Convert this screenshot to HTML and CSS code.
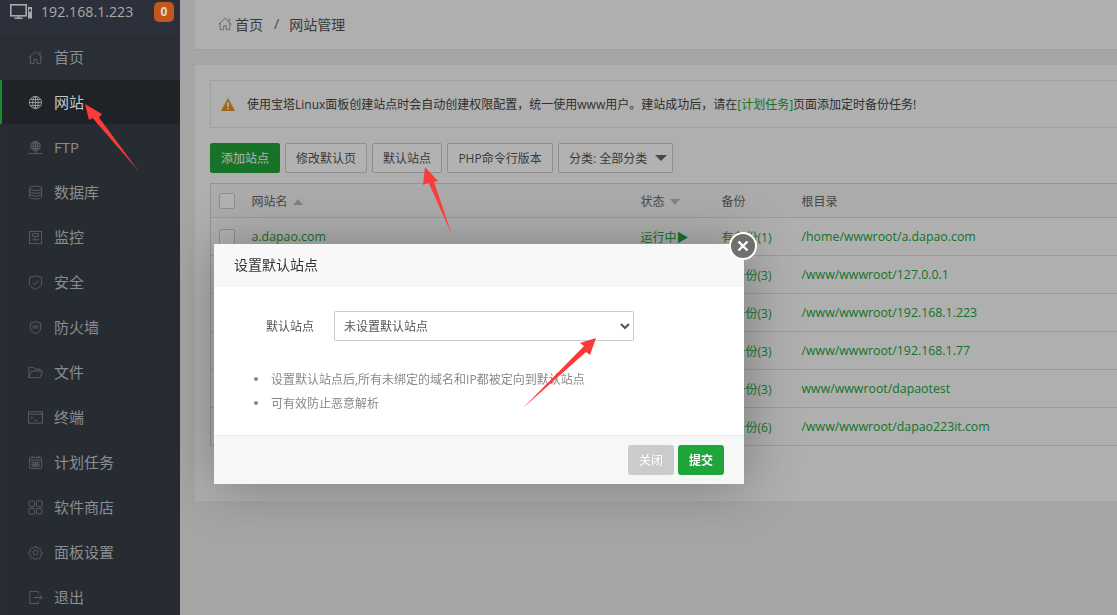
FILE: index.html
```html
<!DOCTYPE html>
<html lang="zh-CN">
<head>
<meta charset="utf-8">
<title>网站管理</title>
<link rel="stylesheet" href="styles.css">
</head>
<body>
<div class="app">
  <aside class="sidebar">
    <div class="host">
      <svg class="host-icon" viewBox="0 0 22 15"><rect x="0.8" y="0.8" width="15.400" height="11" fill="none" stroke="#a7a9ab" stroke-width="1.600"/><path d="M4.500 14.200h8M8.500 12v2" stroke="#a7a9ab" stroke-width="1.400"/><rect x="18" y="3" width="4" height="11.500" fill="#a7a9ab"/><rect x="19.200" y="5" width="1.600" height="3" fill="#2b303a"/></svg>
      <span class="host-ip">192.168.1.223</span>
      <span class="badge">0</span>
    </div>
    <nav class="nav">
      <a class="nav-item"><svg class="nav-icon" viewBox="0 0 16 16"><path d="M0.500 8.500 8 1.500 15.500 8.500M2.500 7V14.500h4V10h3v4.500h4V7M11.500 2.500h1.500v2.500"/></svg><span class="nav-label">首页</span></a>
      <a class="nav-item active"><svg class="nav-icon light" viewBox="0 0 16 16"><circle cx="8" cy="8" r="6.500"/><ellipse cx="8" cy="8" rx="3" ry="6.500"/><path d="M8 1.500v13M1.500 8h13M2.500 4.800h11M2.500 11.200h11"/></svg><span class="nav-label">网站</span></a>
      <a class="nav-item"><svg class="nav-icon" viewBox="0 0 16 16"><circle cx="8" cy="6.500" r="5"/><ellipse cx="8" cy="6.500" rx="2.300" ry="5"/><path d="M8 1.500v10M3 6.500h10M3.800 4h8.400M3.800 9h8.400M0.500 14.500h15M8 11.500v3"/></svg><span class="nav-label">FTP</span></a>
      <a class="nav-item"><svg class="nav-icon" viewBox="0 0 16 16"><ellipse cx="8" cy="3.500" rx="6.500" ry="2.300"/><path d="M1.500 3.500v9c0 1.300 3 2.300 6.500 2.300s6.500-1 6.500-2.300v-9M1.500 6.500c0 1.300 3 2.300 6.500 2.300s6.500-1 6.500-2.300M1.500 9.500c0 1.300 3 2.300 6.500 2.300s6.500-1 6.500-2.300"/></svg><span class="nav-label">数据库</span></a>
      <a class="nav-item"><svg class="nav-icon" viewBox="0 0 16 16"><rect x="1.500" y="1.500" width="13" height="13"/><path d="M3.500 10.500h3l1-2 1.200 3 1-1.500h2M5 4h6v3H5z"/></svg><span class="nav-label">监控</span></a>
      <a class="nav-item"><svg class="nav-icon" viewBox="0 0 16 16"><path d="M8 0.800 14.500 2.800v6c0 3-3.300 5.200-6.500 6.400-3.200-1.200-6.500-3.400-6.500-6.400v-6zM5 7.800l2.300 2.200L11 6.500"/></svg><span class="nav-label">安全</span></a>
      <a class="nav-item"><svg class="nav-icon" viewBox="0 0 16 16"><path d="M8 1.500 13.500 3.500v5c0 3-2.500 5-5.500 6-3-1-5.500-3-5.500-6v-5zM4.800 6.500h6.400M4.800 8.500h6.400"/></svg><span class="nav-label">防火墙</span></a>
      <a class="nav-item"><svg class="nav-icon" viewBox="0 0 16 16"><path d="M1 13.500V2.500h5l1.500 2H13V6.500M1 13.500 3.500 6.500H15.500L13 13.500z"/></svg><span class="nav-label">文件</span></a>
      <a class="nav-item"><svg class="nav-icon" viewBox="0 0 16 16"><rect x="0.500" y="2" width="15" height="12"/><path d="M0.500 4.500h15M3 7l2 1.500L3 10M6.500 11H10"/></svg><span class="nav-label">终端</span></a>
      <a class="nav-item"><svg class="nav-icon" viewBox="0 0 16 16"><rect x="1.500" y="2.500" width="13" height="12" rx="1"/><path d="M1.500 5.500h13M4.500 1v2.500M11.500 1v2.500M3.500 8h9M3.500 10h9M3.500 12h9M6 7.500v5M8 7.500v5M10 7.500v5"/></svg><span class="nav-label">计划任务</span></a>
      <a class="nav-item"><svg class="nav-icon" viewBox="0 0 16 16"><rect x="1" y="1" width="6" height="6" rx="1"/><rect x="9" y="1" width="6" height="6" rx="1"/><rect x="1" y="9" width="6" height="6" rx="1"/><rect x="9" y="9" width="6" height="6" rx="1"/></svg><span class="nav-label">软件商店</span></a>
      <a class="nav-item"><svg class="nav-icon" viewBox="0 0 16 16"><circle cx="8" cy="8" r="2.500"/><path d="M6.800 1.500h2.400l.4 2 1.500.7 1.800-1 1.600 1.700-1.100 1.700.6 1.500 2 .5v2.300l-2 .4-.6 1.500 1.100 1.700-1.600 1.600-1.800-1-1.500.6-.4 2H6.800l-.4-2-1.500-.6-1.800 1-1.600-1.600 1.100-1.700-.6-1.500-2-.4V8.100l2-.5.6-1.500-1.100-1.700 1.600-1.700 1.800 1 1.500-.7z" transform="translate(.8 .2) scale(.9)"/></svg><span class="nav-label">面板设置</span></a>
      <a class="nav-item"><svg class="nav-icon" viewBox="0 0 16 16"><path d="M11 4V1.500H2v13h9V12M6 8h9M12.500 5.500 15 8l-2.500 2.500"/></svg><span class="nav-label">退出</span></a>
    </nav>
  </aside>
  <main class="main">
    <header class="crumbs">
      <svg class="crumb-home" viewBox="0 0 16 16"><path d="M0.500 8.500 8 1.500 15.500 8.500M2.500 7V14.500h4V10h3v4.500h4V7M11.500 2.500h1.500v2.500"/></svg>
      <span class="crumb-link">首页</span>
      <span class="crumb-sep">/</span>
      <span class="crumb-cur">网站管理</span>
    </header>
    <section class="card">
      <div class="notice">
        <svg class="warn" viewBox="0 0 14 13"><path d="M7 0 14 13H0z" fill="#e79320"/><path d="M6.200 4h1.600v5H6.200zM6.200 10h1.600v1.500H6.200z" fill="#fff"/></svg>
        <span>使用宝塔Linux面板创建站点时会自动创建权限配置，统一使用www用户。建站成功后，请在<a class="green">[计划任务]</a>页面添加定时备份任务!</span>
      </div>
      <div class="toolbar">
        <button class="btn primary">添加站点</button>
        <button class="btn">修改默认页</button>
        <button class="btn">默认站点</button>
        <button class="btn php">PHP命令行版本</button>
        <button class="btn dropdown">分类: 全部分类<i class="caret"></i></button>
      </div>
      <table class="table">
        <thead>
          <tr>
            <th class="c-check"><i class="check"></i></th>
            <th class="c-name">网站名<i class="sort-up"></i></th>
            <th class="c-status">状态<i class="sort-down"></i></th>
            <th class="c-backup">备份</th>
            <th>根目录</th>
          </tr>
        </thead>
        <tbody>
          <tr><td class="c-check"><i class="check"></i></td><td class="green latin">a.dapao.com</td><td class="green">运行中▶</td><td class="green">有备份(1)</td><td class="green latin">/home/wwwroot/a.dapao.com</td></tr>
          <tr><td class="c-check"><i class="check"></i></td><td class="green latin">127.0.0.1</td><td class="green">运行中▶</td><td class="green">有备份(3)</td><td class="green latin">/www/wwwroot/127.0.0.1</td></tr>
          <tr><td class="c-check"><i class="check"></i></td><td class="green latin">192.168.1.223</td><td class="green">运行中▶</td><td class="green">有备份(3)</td><td class="green latin">/www/wwwroot/192.168.1.223</td></tr>
          <tr><td class="c-check"><i class="check"></i></td><td class="green latin">192.168.1.77</td><td class="green">运行中▶</td><td class="green">有备份(3)</td><td class="green latin">/www/wwwroot/192.168.1.77</td></tr>
          <tr><td class="c-check"><i class="check"></i></td><td class="green latin">dapaotest</td><td class="green">运行中▶</td><td class="green">有备份(3)</td><td class="green latin">www/wwwroot/dapaotest</td></tr>
          <tr><td class="c-check"><i class="check"></i></td><td class="green latin">dapao223it.com</td><td class="green">运行中▶</td><td class="green">有备份(6)</td><td class="green latin">/www/wwwroot/dapao223it.com</td></tr>
        </tbody>
      </table>
    </section>
  </main>
</div>

<div class="shade"></div>

<div class="modal">
  <button class="modal-close" aria-label="关闭"><svg viewBox="0 0 12 12"><path d="M1.500 1.500l9 9M10.500 1.500l-9 9"/></svg></button>
  <div class="modal-title">设置默认站点</div>
  <div class="modal-body">
    <div class="field">
      <label class="field-label">默认站点</label>
      <select class="field-select"><option>未设置默认站点</option></select>
    </div>
    <ul class="tips">
      <li>设置默认站点后,所有未绑定的域名和IP都被定向到默认站点</li>
      <li>可有效防止恶意解析</li>
    </ul>
  </div>
  <div class="modal-foot">
    <button class="mbtn gray">关闭</button>
    <button class="mbtn submit">提交</button>
  </div>
</div>

<svg class="arrows" viewBox="0 0 1117 615">
  <path d="M85 104 102 114 99 117.500 138.500 171 92.500 118 89 120z"/>
  <path d="M425 167 438 181 434 182 452 235 428.500 182.500 423 185z"/>
  <path d="M596 338 580 343 584 346 523 408 586 352 590 355z"/>
</svg>
</body>
</html>
```

FILE: styles.css
```css
* { box-sizing: border-box; }
html, body { margin: 0; height: 100%; overflow: hidden; }
body {
  font-family: "Open Sans", "Noto Sans CJK SC", sans-serif;
  font-size: 12px;
  color: #666;
  background: #ececec;
}
.app { display: flex; height: 615px; }

.sidebar {
  position: relative;
  z-index: 3;
  width: 180px;
  flex: none;
  background: #272c33;
  overflow: hidden;
}
.host {
  display: flex;
  align-items: center;
  height: 35px;
  padding: 0 6px 12px 10px;
  background: #2b303a;
}
.host-icon { width: 22px; height: 15px; flex: none; }
.host-ip { margin-left: 9px; font-size: 14.200px; line-height: 20px; color: #a7a9ab; flex: 1; }
.badge {
  width: 20px;
  height: 20px;
  border-radius: 5px;
  background: #c2591b;
  color: #e6d5c8;
  font-size: 12px;
  font-weight: 700;
  line-height: 20px;
  text-align: center;
}
.nav { display: flex; flex-direction: column; }
.nav-item {
  display: flex;
  align-items: center;
  height: 45px;
  padding-left: 28px;
  font-size: 15px;
  color: #8a8d91;
  box-shadow: inset 2px 0 0 #2a2c2e;
}
.nav-label { position: relative; top: -1px; }
.nav-item:first-child { background: #2a2f37; }
.nav-icon {
  width: 15px;
  height: 15px;
  margin-right: 11px;
  flex: none;
  fill: none;
  stroke: #5c6065;
  stroke-width: 1;
}
.nav-icon.light { stroke: #9a9da0; }
.nav-item.active {
  height: 44px;
  margin-bottom: 1px;
  padding-left: 26px;
  border-left: 2px solid #1c8a33;
  background: #1f2227;
  color: #c4c6c8;
  box-shadow: none;
}

.main { flex: 1; min-width: 0; display: flex; flex-direction: column; padding: 0 0 0 15px; }
.crumbs {
  display: flex;
  align-items: center;
  height: 50px;
  padding: 0 0 2px 23px;
  background: #fbfbfb;
  font-size: 14px;
  border-bottom: 1px solid #e4e4e4;
}
.crumb-home { width: 14px; height: 14px; margin-right: 3px; fill: none; stroke: #888; stroke-width: 1; }
.crumb-link { color: #555; }
.crumb-sep { margin: 0 10px 0 11px; color: #666; }
.crumb-cur { color: #555; }

.card {
  margin-top: 15px;
  height: 436px;
  padding: 15px 0 0 15px;
  background: #fbfbfb;
}
.notice {
  display: flex;
  align-items: center;
  height: 48px;
  padding-left: 10px;
  border: 1px solid #e6e6e6;
  border-right: 0;
  color: #444;
}
.warn { width: 14px; height: 13px; margin-right: 12px; flex: none; }
.green { color: #20a53a; }
.toolbar { display: flex; gap: 5px; margin-top: 15px; }
.btn {
  height: 30px;
  padding: 0 10px;
  border: 1px solid #ccc;
  border-radius: 2px;
  background: #fff;
  color: #555;
  font: inherit;
}
.btn.php { width: 106px; padding: 0; }
.btn.primary { background: #20a53a; border-color: #20a53a; color: #fff; }
.btn.dropdown { display: flex; align-items: center; justify-content: space-between; width: 115px; padding-right: 5px; color: #555; }
.caret {
  width: 0;
  height: 0;
  border-left: 6px solid transparent;
  border-right: 6px solid transparent;
  border-top: 6px solid #666;
}
.table {
  width: 100%;
  margin-top: 10px;
  border-collapse: collapse;
  table-layout: fixed;
  border-top: 1px solid #d5d5d5;
  border-left: 1px solid #d5d5d5;
}
.table th {
  height: 34px;
  padding: 0;
  text-align: left;
  font-weight: 400;
  background: #f5f5f5;
  color: #666;
  border-bottom: 1px solid #ddd;
}
.table td { height: 38px; padding: 0; border-bottom: 1px solid #ddd; }
.table td.latin { font-size: 12.350px; }
.c-check { width: 41px; padding-left: 8px !important; }
.c-name { width: 389px; }
.c-status { width: 81px; }
.c-backup { width: 80px; }
.check {
  display: block;
  width: 16px;
  height: 16px;
  border: 1px solid #ccc;
  border-radius: 2px;
  background: #fff;
}
.sort-up, .sort-down {
  display: inline-block;
  width: 0;
  height: 0;
  margin-left: 5px;
  vertical-align: middle;
  border-left: 5px solid transparent;
  border-right: 5px solid transparent;
}
.sort-up { border-bottom: 6px solid #bbb; }
.sort-down { border-top: 6px solid #bbb; }

.shade {
  position: fixed;
  inset: 0;
  z-index: 2;
  background: rgba(0, 0, 0, .3);
}
.modal {
  position: fixed;
  left: 214px;
  top: 244px;
  z-index: 4;
  width: 530px;
  height: 240px;
  display: flex;
  flex-direction: column;
  background: #fff;
  box-shadow: 1px 1px 50px rgba(0, 0, 0, .3);
}
.modal-close {
  position: absolute;
  top: -12px;
  right: -13px;
  width: 28px;
  height: 28px;
  padding: 0;
  display: flex;
  align-items: center;
  justify-content: center;
  border: 2px solid #fff;
  border-radius: 50%;
  background: #6f6f6f;
}
.modal-close svg { width: 12px; height: 12px; fill: none; stroke: #fff; stroke-width: 2.400; }
.modal-title {
  height: 42px;
  padding-left: 20px;
  line-height: 42px;
  font-size: 14px;
  color: #333;
  background: #f8f8f8;
  border-bottom: 1px solid #eee;
}
.modal-body { flex: 1; padding-top: 25px; }
.field { display: flex; align-items: center; padding-left: 52px; }
.field-label { width: 68px; color: #555; }
.field-select {
  width: 300px;
  height: 30px;
  padding-left: 5px;
  border: 1px solid #ccc;
  border-radius: 2px;
  background: #fff;
  color: #555;
  font: inherit;
}
.tips { margin: 26px 0 0; padding: 0 0 0 40px; list-style: none; color: #888; }
.tips li { display: flex; align-items: center; height: 24px; }
.tips li::before {
  content: "";
  width: 4px;
  height: 4px;
  margin-right: 13px;
  border-radius: 50%;
  background: #888;
}
.modal-foot {
  height: 49px;
  display: flex;
  justify-content: flex-end;
  gap: 4px;
  padding: 9px 20px 0 0;
  background: #f6f8f8;
  border-top: 1px solid #eee;
}
.mbtn {
  width: 46px;
  height: 30px;
  padding: 0;
  border: 0;
  border-radius: 3px;
  color: #fff;
  font: inherit;
}
.mbtn.gray { background: #cbcbcb; }
.mbtn.submit { background: #20a53a; font-weight: 700; }

.arrows {
  position: fixed;
  inset: 0;
  z-index: 5;
  width: 1117px;
  height: 615px;
  pointer-events: none;
}
.arrows path { fill: #fb3a3a; }
```
